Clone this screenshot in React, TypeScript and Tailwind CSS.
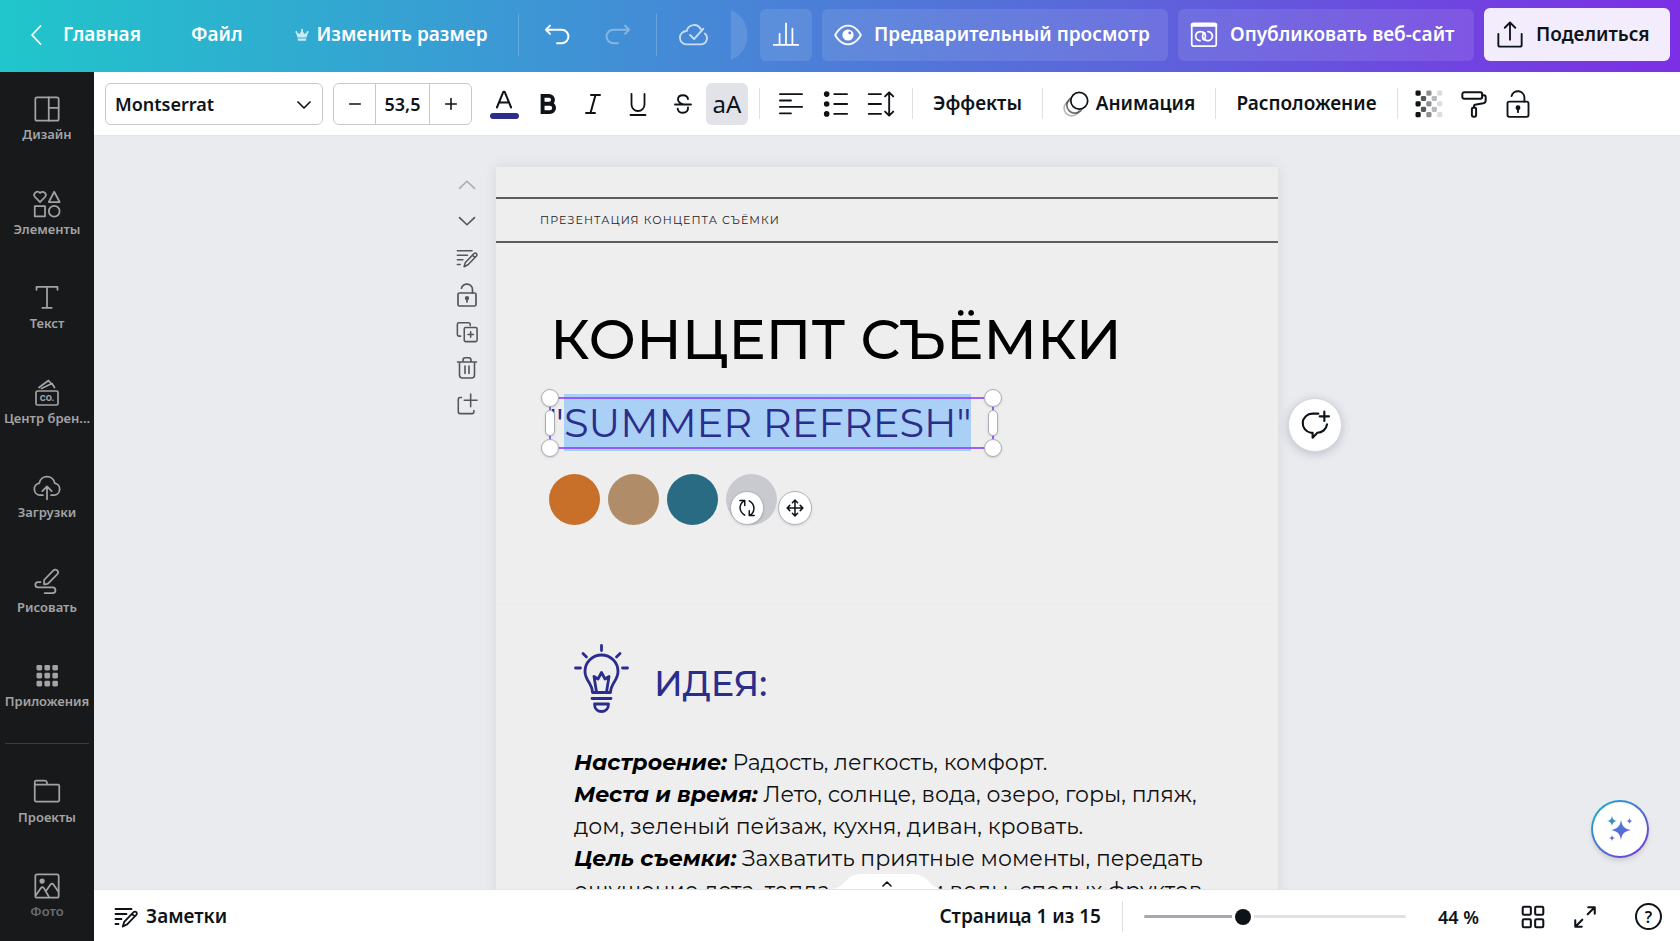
import { useState } from "react";
import type { ReactNode } from "react";

type IconProps = { className?: string; children: ReactNode; stroke?: number };

function Icon({ className = "size-6", children, stroke = 1.5 }: IconProps) {
  return (
    <svg
      viewBox="0 0 24 24"
      className={`shrink-0 ${className}`}
      fill="none"
      stroke="currentColor"
      strokeWidth={stroke}
      strokeLinecap="round"
      strokeLinejoin="round"
      aria-hidden="true"
    >
      {children}
    </svg>
  );
}

const lockPaths = (
  <>
    <rect x="3" y="10" width="18" height="13" rx="1.500" />
    <path d="M6.500 5.200A5.600 5.600 0 0 1 17.500 6.500V10" />
    <circle cx="12" cy="15.200" r="1.300" fill="currentColor" />
    <path d="M12 15.500v3.500" />
  </>
);

const notesPaths = (
  <>
    <path d="M1.500 4h16M1.500 9h11M1.500 14h6M1.500 19h3" />
    <path d="M8.800 21.500l1.400-4.600L19.600 7.200a1.800 1.800 0 0 1 2.700 0 1.800 1.800 0 0 1 0 2.600l-9.200 9.600zM18 9l2.600 2.400" />
  </>
);

const linkHalf = "M8.600 16.900A3.900 3.900 0 1 1 10.200 9.400c1.900.5 3.100 2 3 3.800 0 1.300-.7 2.200-1.800 2.700";

function Header() {
  return (
    <header className="flex h-[72px] shrink-0 items-center bg-[linear-gradient(90deg,#20c6cb_0%,#3e94d5_33%,#5b66da_66%,#7d2fe4_100%)] pr-[10px] pb-[3px] text-[19px] font-semibold text-white">
      <nav className="flex items-center">
        <a href="#home" className="ml-6 flex items-center gap-[15px]">
          <Icon stroke={1.8}>
            <path d="M16.500 3L8 12l8.500 9" />
          </Icon>
          Главная
        </a>
        <button className="ml-[50px]">Файл</button>
        <button className="ml-[52px] flex items-center gap-2">
          <svg viewBox="0 0 14 14" className="size-[14px] opacity-75" fill="currentColor" aria-hidden="true">
            <path d="M7 .8a1.100 1.100 0 0 1 .6 2L9.300 6l2.500-1.600a1 1 0 1 1 1.100.6L11.500 9.500h-9L1.100 5a1 1 0 1 1 1.100-.6L4.700 6l1.700-3.200A1.100 1.100 0 0 1 7 .8zM2.600 10.500h8.800l-.4 2.200H3z" />
          </svg>
          Изменить размер
        </button>
      </nav>
      <div className="flex items-center">
        <span className="ml-[30px] h-[42px] w-px bg-white/20" />
        <button aria-label="Отменить" className="ml-6">
          <Icon className="size-7" stroke={1.7}>
            <path d="M6 4L2.500 7.500 6 11M2.500 7.500H16a5.800 5.800 0 0 1 0 11.600h-4" />
          </Icon>
        </button>
        <button aria-label="Повторить" className="ml-[33px] opacity-35">
          <Icon className="size-7" stroke={1.7}>
            <path d="M18 4l3.500 3.500L18 11M21.500 7.500H8a5.800 5.800 0 0 0 0 11.600h4" />
          </Icon>
        </button>
        <span className="ml-6 h-[42px] w-px bg-white/20" />
        <button aria-label="Изменения сохранены" className="ml-[22px] opacity-70">
          <Icon className="size-[30px]" stroke={1.5}>
            <path d="M17.500 7.500A6 6 0 0 0 6.200 8.800 5 5 0 0 0 6 19.500h12a5 5 0 0 0 2.700-8.700" />
            <path d="M8.800 12l3.300 3.200 7.400-8.200" />
          </Icon>
        </button>
        <svg viewBox="0 0 17 50" className="ml-[22px] h-[50px] w-[17px]" aria-hidden="true">
          <path d="M0 0C22 9 22 41 0 50z" fill="#fff" fillOpacity=".12" />
        </svg>
      </div>
      <div className="ml-auto flex items-center gap-[10px]">
        <button aria-label="Статистика" className="flex h-[52px] w-[52px] items-center justify-center rounded-md bg-white/10">
          <Icon className="size-7" stroke={1.5}>
            <path d="M1.500 20.500h21M6.500 20V11M12 20V2M17.500 20V6.500" />
          </Icon>
        </button>
        <button className="flex h-[52px] w-[346px] items-center rounded-md bg-white/10 pl-3">
          <Icon className="size-7" stroke={1.6}>
            <path d="M1 12s3.800-8 11-8 11 8 11 8-3.800 8-11 8S1 12 1 12z" />
            <circle cx="12" cy="12" r="4" fill="currentColor" />
            <circle cx="13.500" cy="10.300" r="1.200" fill="#6a78dc" stroke="none" />
          </Icon>
          <span className="ml-3">Предварительный просмотр</span>
        </button>
        <button className="flex h-[52px] w-[296px] items-center rounded-md bg-white/10 pl-3">
          <Icon className="size-7" stroke={1.5}>
            <rect x="1.500" y="2" width="21" height="19.500" rx="1.500" />
            <path d="M2 3.500h20" strokeWidth="3" />
            <path d={linkHalf} />
            <path d={linkHalf} transform="rotate(180 12 13)" />
          </Icon>
          <span className="ml-3">Опубликовать веб-сайт</span>
        </button>
        <button className="flex h-[53px] w-[186px] items-center rounded-md bg-[#f3ecfc] pl-3 text-[#0e1318]">
          <Icon className="size-7" stroke={1.6}>
            <path d="M2 11v9.500a1.500 1.500 0 0 0 1.500 1.500h17a1.500 1.500 0 0 0 1.500-1.500V11M12 16V1.500M7.500 5.800L12 1.300l4.500 4.500" />
          </Icon>
          <span className="ml-3">Поделиться</span>
        </button>
      </div>
    </header>
  );
}

const navTop: { label: string; icon: ReactNode }[] = [
  {
    label: "Дизайн",
    icon: (
      <Icon className="size-7">
        <rect x="2" y="2" width="20" height="20" rx="1.500" />
        <path d="M13.500 2v20M13.500 11H22" />
      </Icon>
    ),
  },
  {
    label: "Элементы",
    icon: (
      <Icon className="size-7">
        <path d="M6 10.300L1.700 6A2.700 2.700 0 0 1 6 2.600 2.700 2.700 0 0 1 10.300 6zM18.200 1.500l4.600 8.800h-9.200zM1.500 13.800h8.800v8.800H1.500z" />
        <circle cx="18.200" cy="18.200" r="4.600" />
      </Icon>
    ),
  },
  {
    label: "Текст",
    icon: (
      <Icon className="size-7">
        <path d="M3 5V2.500h18V5M12 2.500v18M8 20.500h8" />
      </Icon>
    ),
  },
  {
    label: "Центр брен...",
    icon: (
      <svg viewBox="0 0 28 28" className="size-7" fill="none" stroke="currentColor" strokeWidth="1.700" strokeLinejoin="round" strokeLinecap="round" aria-hidden="true">
        <rect x="3" y="12" width="22" height="14" rx="1.500" />
        <path d="M6 8.500L15.500 1.500l2.500 3M8.500 9.500L19 4.500l2.500 4" />
        <text x="14" y="22" textAnchor="middle" fontSize="8" fontWeight="800" stroke="none" fill="currentColor" fontFamily="Inter, sans-serif">CO.</text>
      </svg>
    ),
  },
  {
    label: "Загрузки",
    icon: (
      <Icon className="size-7">
        <path d="M8.500 19H6A5.200 5.200 0 0 1 5.400 8.700a6.700 6.700 0 0 1 13.200 0A5.200 5.200 0 0 1 18 19h-2.500M12 22.500V12M8 15.500l4-4 4 4" />
      </Icon>
    ),
  },
  {
    label: "Рисовать",
    icon: (
      <Icon className="size-7">
        <path d="M9.500 14v-3.700l8-8.300a2.200 2.200 0 0 1 3.400.2 2.300 2.300 0 0 1 0 3.100l-8 8c-1 .7-2.200.7-3.400.7zM6.500 12H4.300a2.200 2.200 0 0 0 0 4.600h12.500a2.400 2.400 0 0 1 0 4.900H10" />
      </Icon>
    ),
  },
  {
    label: "Приложения",
    icon: (
      <Icon className="size-7">
        <g fill="currentColor" stroke="none">
          {[2.5, 9.3, 16.1].map((y) =>
            [3, 9.8, 16.6].map((x) => <rect key={`${x}-${y}`} x={x} y={y} width="4.800" height="4.800" rx="1.200" />),
          )}
        </g>
      </Icon>
    ),
  },
];

function SideItem({ label, icon, faded = false }: { label: string; icon: ReactNode; faded?: boolean }) {
  return (
    <li>
      <button className="flex h-[47px] w-full flex-col items-center justify-between text-[#a3a3a4]">
        {icon}
        <span className={faded ? "text-[13px] leading-4 font-semibold whitespace-nowrap text-[#6c6c6e]" : "text-[13px] leading-4 font-semibold whitespace-nowrap"}>{label}</span>
      </button>
    </li>
  );
}

function Sidebar() {
  return (
    <aside className="flex w-[94px] shrink-0 flex-col bg-[#18191b] pt-[23px] pb-[22px]">
      <ul className="flex flex-1 flex-col justify-between">
        {navTop.map((item) => (
          <SideItem key={item.label} {...item} />
        ))}
      </ul>
      <hr className="mx-[5px] my-[34px] border-[#3b3c3e]" />
      <ul className="flex flex-col gap-[47px]">
        <SideItem
          label="Проекты"
          icon={
            <Icon className="size-7">
              <path d="M1.500 19V3.500A1.200 1.200 0 0 1 2.700 2.300h7.500a2 2 0 0 1 1.800 1.800v1.500h9.300a1.200 1.200 0 0 1 1.200 1.200V19a1.200 1.200 0 0 1-1.200 1.200H2.700A1.200 1.200 0 0 1 1.500 19zM1.500 5.600H12" />
            </Icon>
          }
        />
        <SideItem
          faded
          label="Фото"
          icon={
            <Icon className="size-7">
              <rect x="2" y="2" width="20" height="20" rx="1.500" />
              <circle cx="7.800" cy="7.800" r="1.500" fill="currentColor" />
              <path d="M2.500 20l4.300-6.200c.8-1 1.700-1 2.500 0L13.500 21M11 16.500l4-5.700c.8-1 1.700-1 2.500 0l4.300 6.200" />
            </Icon>
          }
        />
      </ul>
    </aside>
  );
}

function Divider() {
  return <span className="h-[31px] w-px shrink-0 bg-[#dfe0e3]" />;
}

function Toolbar() {
  const [size, setSize] = useState("53,5");
  const shades = ["#0e1318", "#55585b", "#8c8e90", "#b9babb", "#dcddde"];
  return (
    <div className="flex h-[64px] shrink-0 items-center border-b border-[#e2e3e6] bg-white pl-[11px] text-[19px] font-semibold">
      <div className="relative">
        <select aria-label="Шрифт" className="block h-[42px] w-[218px] appearance-none rounded-md border border-[#c4c8cd] bg-white pl-[9px] text-lg font-semibold">
          <option>Montserrat</option>
        </select>
        <Icon className="pointer-events-none absolute top-[13px] right-[10px] size-[18px]" stroke={2.2}>
          <path d="M4 8l8 8 8-8" />
        </Icon>
      </div>
      <div className="ml-[10px] flex h-[42px] w-[139px] divide-x divide-[#c4c8cd] overflow-hidden rounded-md border border-[#c4c8cd]">
        <button aria-label="Уменьшить размер" className="flex flex-1 items-center justify-center">
          <Icon className="size-4" stroke={2.4}>
            <path d="M4 12h16" />
          </Icon>
        </button>
        <input aria-label="Размер шрифта" value={size} onChange={(e) => setSize(e.target.value)} className="w-[54px] text-center text-lg font-semibold" />
        <button aria-label="Увеличить размер" className="flex flex-1 items-center justify-center">
          <Icon className="size-4" stroke={2.4}>
            <path d="M4 12h16M12 4v16" />
          </Icon>
        </button>
      </div>
      <div className="ml-[11px] flex items-center">
        <button aria-label="Цвет текста" className="flex w-[42px] flex-col items-center">
          <Icon className="h-[22px] w-5" stroke={2.4}>
            <path d="M3.500 21L11.300 2h1.400l7.800 19M6 15h12" />
          </Icon>
          <span className="mt-[2px] h-[6px] w-[29px] rounded-full bg-[#2b2d8c]" />
        </button>
        <button aria-label="Полужирный" className="flex w-[46px] justify-center">
          <Icon className="size-[26px]" stroke={3.6}>
            <path d="M7 4.500h6a3.500 3.500 0 0 1 0 7.200H7h6.700a3.900 3.900 0 0 1 0 7.800H7z" strokeLinecap="butt" strokeLinejoin="miter" />
          </Icon>
        </button>
        <button aria-label="Курсив" className="flex w-11 justify-center">
          <Icon className="size-6" stroke={2}>
            <path d="M10 3h9M5 21h9M14.500 3l-5 18" />
          </Icon>
        </button>
        <button aria-label="Подчёркнутый" className="flex w-[45px] justify-center">
          <Icon className="size-6" stroke={1.8}>
            <path d="M5.500 2v10.500a6.500 6.500 0 0 0 13 0V2M4.500 23h15" />
          </Icon>
        </button>
        <button aria-label="Зачёркнутый" className="flex w-[45px] justify-center">
          <Icon className="size-6" stroke={1.900}>
            <path d="M4 12.500h16M17 7c-.4-2.300-2.300-3.800-5-3.800-3 0-5 1.700-5 4.200 0 2.300 1.600 3.600 5.500 5M17 15.500c.3 3.200-1.800 5.300-5 5.300-2.900 0-4.900-1.600-5.300-4" />
          </Icon>
        </button>
        <button aria-pressed="true" aria-label="Верхний регистр" className="ml-px flex h-[42px] w-[42px] items-center justify-center rounded-md bg-[#e2e3e8] text-2xl font-normal">
          aA
        </button>
      </div>
      <div className="ml-[11px] flex items-center">
        <Divider />
        <button aria-label="Выравнивание" className="ml-[17px]">
          <Icon className="size-7" stroke={1.600}>
            <path d="M2.500 3.500h19M2.500 9H12M2.500 14.500h19M2.500 20H12" />
          </Icon>
        </button>
        <button aria-label="Список" className="ml-[17px]">
          <Icon className="size-7" stroke={1.600}>
            <path d="M10.500 3.500h11M10.500 12h11M10.500 20.500h11" />
            <g fill="currentColor">
              <circle cx="4" cy="3.500" r="1.600" />
              <circle cx="4" cy="12" r="1.600" />
              <circle cx="4" cy="20.500" r="1.600" />
            </g>
          </Icon>
        </button>
        <button aria-label="Интервал" className="mr-[17px] ml-[17px]">
          <Icon className="size-7" stroke={1.600}>
            <path d="M1.500 3.500H12M1.500 12H12M1.500 20.500H12M19 2.500v19M15.500 5.500L19 2l3.500 3.500M15.500 18.500L19 22l3.500-3.500" />
          </Icon>
        </button>
        <Divider />
        <button className="w-[129px] text-center">Эффекты</button>
        <Divider />
        <button className="flex w-[172px] items-center justify-center gap-[7px]">
          <Icon className="size-[26px]" stroke={1.600}>
            <circle cx="8" cy="16" r="7" opacity=".3" />
            <circle cx="11" cy="13" r="7.500" opacity=".6" />
            <circle cx="15" cy="9" r="7.800" fill="#fff" />
          </Icon>
          Анимация
        </button>
        <Divider />
        <button className="w-[181px] text-center">Расположение</button>
        <Divider />
        <button aria-label="Прозрачность" className="ml-[17px]">
          <svg viewBox="0 0 28 28" className="size-7" aria-hidden="true">
            {[0, 1, 2, 3, 4].map((row) =>
              shades.map((fill, col) =>
                (row + col) % 2 === 0 ? <rect key={`${row}-${col}`} x={0.5 + col * 5.4} y={0.5 + row * 5.4} width="5.200" height="5.200" rx="1.400" fill={fill} /> : null,
              ),
            )}
          </svg>
        </button>
        <button aria-label="Копировать стиль" className="ml-[17px]">
          <Icon className="size-7" stroke={1.700}>
            <rect x="2" y="2" width="17" height="5.500" rx="1.500" />
            <path d="M19 4.500h1.500A1.500 1.500 0 0 1 22 6v3a2.500 2.500 0 0 1-2 2.400l-7.200 1.200a1 1 0 0 0-.8 1V15" />
            <rect x="10.200" y="15" width="3.600" height="8" rx="1.500" />
          </Icon>
        </button>
        <button aria-label="Заблокировать" className="ml-4">
          <Icon className="size-7" stroke={1.600}>
            {lockPaths}
          </Icon>
        </button>
      </div>
    </div>
  );
}

function PageTools() {
  return (
    <div className="flex w-[58px] shrink-0 flex-col items-center text-[#54565c]">
      <button aria-label="Вверх" className="flex h-9 items-center opacity-40">
        <Icon className="size-5" stroke={2}>
          <path d="M3 16l9-8.500 9 8.500" />
        </Icon>
      </button>
      <button aria-label="Вниз" className="flex h-9 items-center">
        <Icon className="size-5" stroke={2}>
          <path d="M3 8l9 8.500L21 8" />
        </Icon>
      </button>
      <button aria-label="Заметки к странице" className="flex h-[37px] items-center">
        <Icon className="size-[22px]" stroke={1.7}>{notesPaths}</Icon>
      </button>
      <button aria-label="Заблокировать страницу" className="flex h-[37px] items-center">
        <Icon className="size-6" stroke={1.7}>{lockPaths}</Icon>
      </button>
      <button aria-label="Дублировать страницу" className="flex h-[37px] items-center">
        <Icon className="size-[22px]" stroke={1.700}>
          <path d="M5 16.500H3A1.500 1.500 0 0 1 1.500 15V3.500A1.500 1.500 0 0 1 3 2h11a1.500 1.500 0 0 1 1.500 1.500V5" />
          <rect x="9" y="7" width="14" height="15.500" rx="1.500" />
          <path d="M16 11.800v6M13 14.800h6" />
        </Icon>
      </button>
      <button aria-label="Удалить страницу" className="flex h-9 items-center">
        <Icon className="size-6" stroke={1.600}>
          <path d="M2.500 6h19M8 6V4.200A2.400 2.400 0 0 1 10.400 1.800h3.200A2.400 2.400 0 0 1 16 4.200V6M4.500 6v13a3 3 0 0 0 3 3h9a3 3 0 0 0 3-3V6M10 10v7.500M14 10v7.500" />
        </Icon>
      </button>
      <button aria-label="Добавить страницу" className="flex h-9 items-center">
        <Icon className="size-[22px]" stroke={1.700}>
          <path d="M6 5H4.500A2 2 0 0 0 2.500 7v13.500a2 2 0 0 0 2 2h13a2 2 0 0 0 2-2V19M16 1v14M9 8h14" />
        </Icon>
      </button>
    </div>
  );
}

function Handle({ className }: { className: string }) {
  return <span className={`absolute border border-[#a9adb5] bg-white shadow-sm ${className}`} />;
}

function SelectedText() {
  return (
    <div className="relative mt-[20px] ml-[53px] flex h-[57px] w-[445px] items-center">
      <p className="flex text-[40px] leading-[57px] whitespace-nowrap text-[#2b2d8c]">
        <span>"</span>
        <span className="bg-[#abd0f6]">SUMMER REFRESH"</span>
      </p>
      <span className="absolute inset-x-0 top-[3px] bottom-[2px] border-2 border-[#8b3dff]/80" />
      <Handle className="-top-[5px] -left-2 size-[18px] rounded-full" />
      <Handle className="-top-[5px] -right-2 size-[18px] rounded-full" />
      <Handle className="-bottom-[6px] -left-2 size-[18px] rounded-full" />
      <Handle className="-right-2 -bottom-[6px] size-[18px] rounded-full" />
      <Handle className="top-4 -left-1 h-[26px] w-[10px] rounded-full" />
      <Handle className="top-4 -right-1 h-[26px] w-[10px] rounded-full" />
      <div className="absolute top-[97px] left-[181px] flex gap-[14px] text-[#0e1318]">
        <button aria-label="Повернуть" className="flex size-[34px] items-center justify-center rounded-full border border-[#b0b4bb] bg-white shadow-sm">
          <Icon className="size-[18px]" stroke={2}>
            <path d="M9 21.500C1 17 .8 7 8 2.500M2.500 2H9v6.500M15 2.500c8 4.500 8.200 14.500 1 19M21.500 22H15v-6.500" />
          </Icon>
        </button>
        <button aria-label="Переместить" className="flex size-[34px] items-center justify-center rounded-full border border-[#b0b4bb] bg-white shadow-sm">
          <Icon className="size-[18px]" stroke={2}>
            <path d="M12 1.500v21M1.500 12h21M8.500 5L12 1.500 15.500 5M8.500 19l3.500 3.500 3.500-3.500M5 8.500L1.500 12 5 15.500M19 8.500l3.500 3.500-3.500 3.500" />
          </Icon>
        </button>
      </div>
    </div>
  );
}

function Bulb() {
  return (
    <svg viewBox="0 0 55 70" className="h-[70px] w-[55px]" fill="none" stroke="#2b2d8c" strokeWidth="2.800" strokeLinecap="round" strokeLinejoin="round" aria-hidden="true">
      <path d="M27.500 1.500v5M9 9.500l3.500 3.500M46 9.500L42.500 13M1.500 24h5M48.500 24h5" />
      <path d="M18.500 48.500c0-9-7.500-12-7.500-21a16.500 16.500 0 0 1 33 0c0 9-7.500 12-7.500 21zM22.500 48L20 32.500l4 2.500 3.500-6.500L31 35l4-2.500L32.500 48M18 54.500h19M20.500 60h14c0 10-14 10-14 0z" />
    </svg>
  );
}

function DesignPage() {
  return (
    <article className="w-[782px] shrink-0 bg-[#eeeeef] font-[Montserrat,Inter,sans-serif] text-black shadow-[0_0_12px_rgba(60,70,100,0.12)]">
      <section className="h-[438px] border-b border-[#ebebec] pt-[30px]">
        <p className="flex h-[46px] items-center border-y-2 border-[#5c5c5e] pl-11 text-[11px] tracking-widest text-[#222]">ПРЕЗЕНТАЦИЯ КОНЦЕПТА СЪЁМКИ</p>
        <h1 className="mt-[61px] ml-[54px] text-[56px] leading-[70px] font-medium whitespace-nowrap">КОНЦЕПТ СЪЁМКИ</h1>
        <SelectedText />
        <ul className="mt-[23px] ml-[53px] flex gap-2">
          <li className="size-[51px] rounded-full bg-[#c86f2a]" />
          <li className="size-[51px] rounded-full bg-[#b18c68]" />
          <li className="size-[51px] rounded-full bg-[#296b82]" />
          <li className="size-[51px] rounded-full bg-[#c9cad0]" />
        </ul>
      </section>
      <section className="pt-[39px] pb-16 pl-[78px]">
        <div className="flex items-center gap-[25px]">
          <Bulb />
          <h2 className="pt-[10px] text-[35px] leading-10 font-medium text-[#2b2d8c]">ИДЕЯ:</h2>
        </div>
        <p className="mt-[33px] text-[22px] leading-8 whitespace-nowrap text-[#111]">
          <strong className="font-bold text-black italic">Настроение:</strong> Радость, легкость, комфорт.
          <br />
          <strong className="font-bold text-black italic">Места и время:</strong> Лето, солнце, вода, озеро, горы, пляж,
          <br />
          дом, зеленый пейзаж, кухня, диван, кровать.
          <br />
          <strong className="font-bold text-black italic">Цель съемки:</strong> Захватить приятные моменты, передать
          <br />
          ощущение лета, тепла, солнца и воды, спелых фруктов
        </p>
      </section>
    </article>
  );
}

function Canvas() {
  return (
    <main className="relative min-h-0 flex-1 overflow-hidden bg-[#eaebef]">
      <div className="flex justify-center pt-[31px]">
        <PageTools />
        <DesignPage />
        <div className="flex w-[58px] shrink-0 justify-center pl-4">
          <button aria-label="Добавить комментарий" className="mt-[231px] flex size-[54px] shrink-0 items-center justify-center rounded-full border border-[#d5d7dd] bg-white shadow-[0_2px_10px_rgba(50,60,90,0.25)]">
            <Icon className="size-8" stroke={1.600}>
              <path d="M14.500 3.500H10a7.200 7.200 0 0 0-1.200 14.300h1.400V21.500l3.600-3.700A7.300 7.300 0 0 0 21 11.500M19 2v7M15.500 5.500h7" />
            </Icon>
          </button>
        </div>
      </div>
      <button aria-label="Быстрые действия" className="absolute right-[31px] bottom-[31px] flex size-[58px] items-center justify-center rounded-full bg-[linear-gradient(135deg,#17b5c8,#4a74d3_50%,#7531d8)] p-[2px] shadow-md">
        <span className="flex size-full items-center justify-center rounded-full bg-white">
          <svg viewBox="0 0 28 28" className="size-7" aria-hidden="true">
            <defs>
              <linearGradient id="spark" x1="0" y1="0" x2="1" y2="1">
                <stop offset="0.200" stopColor="#3f83cf" />
                <stop offset="0.800" stopColor="#6a5be0" />
              </linearGradient>
            </defs>
            <path d="M15 5c1.200 6.500 3.500 9 10 10-6.500 1.200-9 3.500-10 10-1.200-6.500-3.500-8.800-10-10 6.500-1.200 8.800-3.500 10-10z" fill="url(#spark)" />
            <path d="M6 1c.6 3.200 1.700 4.400 5 5-3.300.6-4.400 1.800-5 5-.6-3.200-1.700-4.400-5-5 3.300-.6 4.400-1.800 5-5z" fill="#3593bd" />
            <path d="M23.500 3c.4 2 1.200 2.700 3.300 3-2.100.4-2.900 1-3.300 3-.4-2-1.200-2.600-3.300-3 2.100-.3 2.900-1 3.300-3z" fill="#5f6ed6" />
            <path d="M6 20c.4 2 1.200 2.700 3.200 3-2 .4-2.800 1-3.200 3-.4-2-1.200-2.600-3.200-3 2-.3 2.800-1 3.200-3z" fill="#5f6ed6" />
          </svg>
        </span>
      </button>
      <button aria-label="Показать страницы" className="absolute bottom-0 left-1/2 h-[15px] w-[112px] -translate-x-1/2">
        <svg viewBox="0 0 112 15" className="h-[15px] w-[112px]" fill="none" aria-hidden="true">
          <path d="M0 15C14 15 14 0 30 0h52c16 0 16 15 30 15z" fill="#fff" />
          <path d="M52 12l4-4 4 4" stroke="#0e1318" strokeWidth="1.600" strokeLinecap="round" strokeLinejoin="round" />
        </svg>
      </button>
    </main>
  );
}

function Footer() {
  const [zoom, setZoom] = useState(37);
  const fill = { background: `linear-gradient(90deg, #a4a9b0 ${zoom}%, #dfe1e4 ${zoom}%)` };
  return (
    <footer className="flex h-[52px] shrink-0 items-center border-t border-[#e2e3e6] bg-white pt-[2px] pr-[18px] pl-5 text-[19px] font-semibold">
      <button className="flex items-center gap-2">
        <Icon className="size-6" stroke={1.800}>
          {notesPaths}
        </Icon>
        Заметки
      </button>
      <div className="ml-auto flex items-center">
        <span>Страница 1 из 15</span>
        <span className="ml-[21px] h-[31px] w-px bg-[#dfe0e3]" />
        <input
          type="range"
          aria-label="Масштаб"
          value={zoom}
          onChange={(e) => setZoom(Number(e.target.value))}
          style={fill}
          className="ml-[21px] h-[3px] w-[262px] appearance-none rounded-full [&::-webkit-slider-thumb]:size-4 [&::-webkit-slider-thumb]:appearance-none [&::-webkit-slider-thumb]:rounded-full [&::-webkit-slider-thumb]:bg-[#0e1318] [&::-webkit-slider-thumb]:shadow-[0_0_0_3px_#fff]"
        />
        <span className="ml-[32px] w-[44px] text-lg whitespace-nowrap">44 %</span>
        <button aria-label="Сетка" className="ml-[38px]">
          <Icon className="size-[26px]" stroke={1.900}>
            <rect x="2.500" y="2.500" width="7.500" height="7.500" rx="1.200" />
            <rect x="14" y="2.500" width="7.500" height="7.500" rx="1.200" />
            <rect x="2.500" y="14" width="7.500" height="7.500" rx="1.200" />
            <rect x="14" y="14" width="7.500" height="7.500" rx="1.200" />
          </Icon>
        </button>
        <button aria-label="Во весь экран" className="ml-[26px]">
          <Icon className="size-[26px]" stroke={1.900}>
            <path d="M14.500 9.500l6-6M15 3h6v6M9.500 14.500l-6 6M3 15v6h6" />
          </Icon>
        </button>
        <button aria-label="Справка" className="ml-[37px] flex size-[27px] items-center justify-center rounded-full border-2 border-[#0e1318] text-base leading-none font-semibold">
          ?
        </button>
      </div>
    </footer>
  );
}

export default function App() {
  return (
    <div className="flex h-screen flex-col overflow-hidden font-['Noto_Sans',sans-serif] text-[#0e1318]">
      <Header />
      <div className="flex min-h-0 flex-1">
        <Sidebar />
        <div className="flex min-w-0 flex-1 flex-col">
          <Toolbar />
          <Canvas />
          <Footer />
        </div>
      </div>
    </div>
  );
}
